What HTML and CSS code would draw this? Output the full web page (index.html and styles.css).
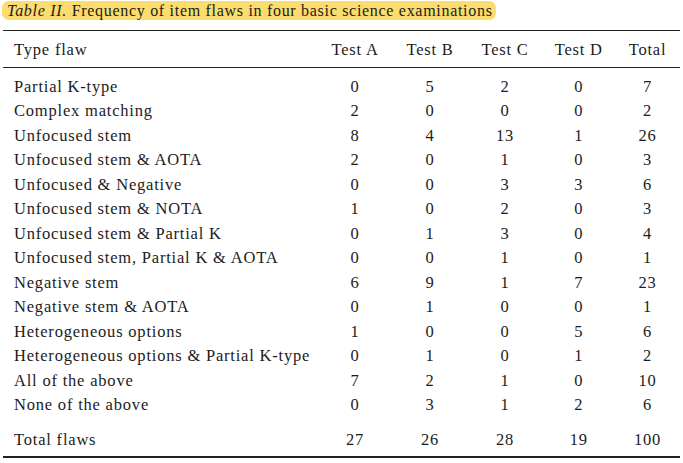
FILE: index.html
```html
<!DOCTYPE html>
<html>
<head>
<meta charset="utf-8">
<link rel="stylesheet" href="styles.css">
</head>
<body>
<div class="caption"><span class="hl"><em>Table II.</em> Frequency of item flaws in four basic science examinations</span></div>
<table class="flaws">
  <colgroup>
    <col class="c-type"><col class="c-a"><col class="c-b"><col class="c-c"><col class="c-d"><col class="c-t">
  </colgroup>
  <thead>
    <tr><th class="name">Type flaw</th><th>Test A</th><th>Test B</th><th>Test C</th><th>Test D</th><th>Total</th></tr>
  </thead>
  <tbody>
    <tr class="first"><td class="name">Partial K-type</td><td>0</td><td>5</td><td>2</td><td>0</td><td>7</td></tr>
    <tr><td class="name">Complex matching</td><td>2</td><td>0</td><td>0</td><td>0</td><td>2</td></tr>
    <tr><td class="name">Unfocused stem</td><td>8</td><td>4</td><td>13</td><td>1</td><td>26</td></tr>
    <tr><td class="name">Unfocused stem &amp; AOTA</td><td>2</td><td>0</td><td>1</td><td>0</td><td>3</td></tr>
    <tr><td class="name">Unfocused &amp; Negative</td><td>0</td><td>0</td><td>3</td><td>3</td><td>6</td></tr>
    <tr><td class="name">Unfocused stem &amp; NOTA</td><td>1</td><td>0</td><td>2</td><td>0</td><td>3</td></tr>
    <tr><td class="name">Unfocused stem &amp; Partial K</td><td>0</td><td>1</td><td>3</td><td>0</td><td>4</td></tr>
    <tr><td class="name">Unfocused stem, Partial K &amp; AOTA</td><td>0</td><td>0</td><td>1</td><td>0</td><td>1</td></tr>
    <tr><td class="name">Negative stem</td><td>6</td><td>9</td><td>1</td><td>7</td><td>23</td></tr>
    <tr><td class="name">Negative stem &amp; AOTA</td><td>0</td><td>1</td><td>0</td><td>0</td><td>1</td></tr>
    <tr><td class="name">Heterogeneous options</td><td>1</td><td>0</td><td>0</td><td>5</td><td>6</td></tr>
    <tr><td class="name">Heterogeneous options &amp; Partial K-type</td><td>0</td><td>1</td><td>0</td><td>1</td><td>2</td></tr>
    <tr><td class="name">All of the above</td><td>7</td><td>2</td><td>1</td><td>0</td><td>10</td></tr>
    <tr class="last"><td class="name">None of the above</td><td>0</td><td>3</td><td>1</td><td>2</td><td>6</td></tr>
  </tbody>
  <tfoot>
    <tr><td class="name">Total flaws</td><td>27</td><td>26</td><td>28</td><td>19</td><td>100</td></tr>
  </tfoot>
</table>
</body>
</html>
```
FILE: styles.css
```css
html, body {
  margin: 0;
  padding: 0;
  background: #ffffff;
}
body {
  font-family: "Liberation Serif", "Times New Roman", serif;
  color: #1c1c1c;
  font-size: 16.5px;
}
.caption {
  padding: 1px 0 0 2px;
  height: 30px;
  box-sizing: border-box;
  line-height: 19px;
}
.hl {
  display: inline-block;
  background: #fbdc6c;
  border-radius: 7px;
  padding: 0 3px 0 5px;
  letter-spacing: 0.7px;
  font-size: 16px;
}
.hl em {
  font-style: italic;
}
.flaws {
  margin-left: 3px;
  width: 677px;
  border-collapse: collapse;
  table-layout: fixed;
  letter-spacing: 0.8px;
  border-top: 1.5px solid #222;
  border-bottom: 2px solid #222;
}
.c-type { width: 314.5px; }
.c-a { width: 75px; }
.c-b { width: 75px; }
.c-c { width: 75px; }
.c-d { width: 72.5px; }
.c-t { width: 65px; }
.flaws th, .flaws td {
  padding: 0;
  text-align: center;
  font-weight: normal;
  white-space: nowrap;
}
.flaws .name {
  text-align: left;
  padding-left: 11px;
}
.flaws thead th {
  height: 34px;
  padding-top: 2px;
  border-bottom: 1.5px solid #222;
}
.flaws tbody td {
  height: 24.5px;
  line-height: 24.5px;
}
.flaws tbody tr.first td {
  padding-top: 6.5px;
}
.flaws tbody tr.last td {
  padding-bottom: 10px;
}
.flaws tfoot td {
  height: 24.5px;
  line-height: 24.5px;
  padding-bottom: 4px;
}
```
